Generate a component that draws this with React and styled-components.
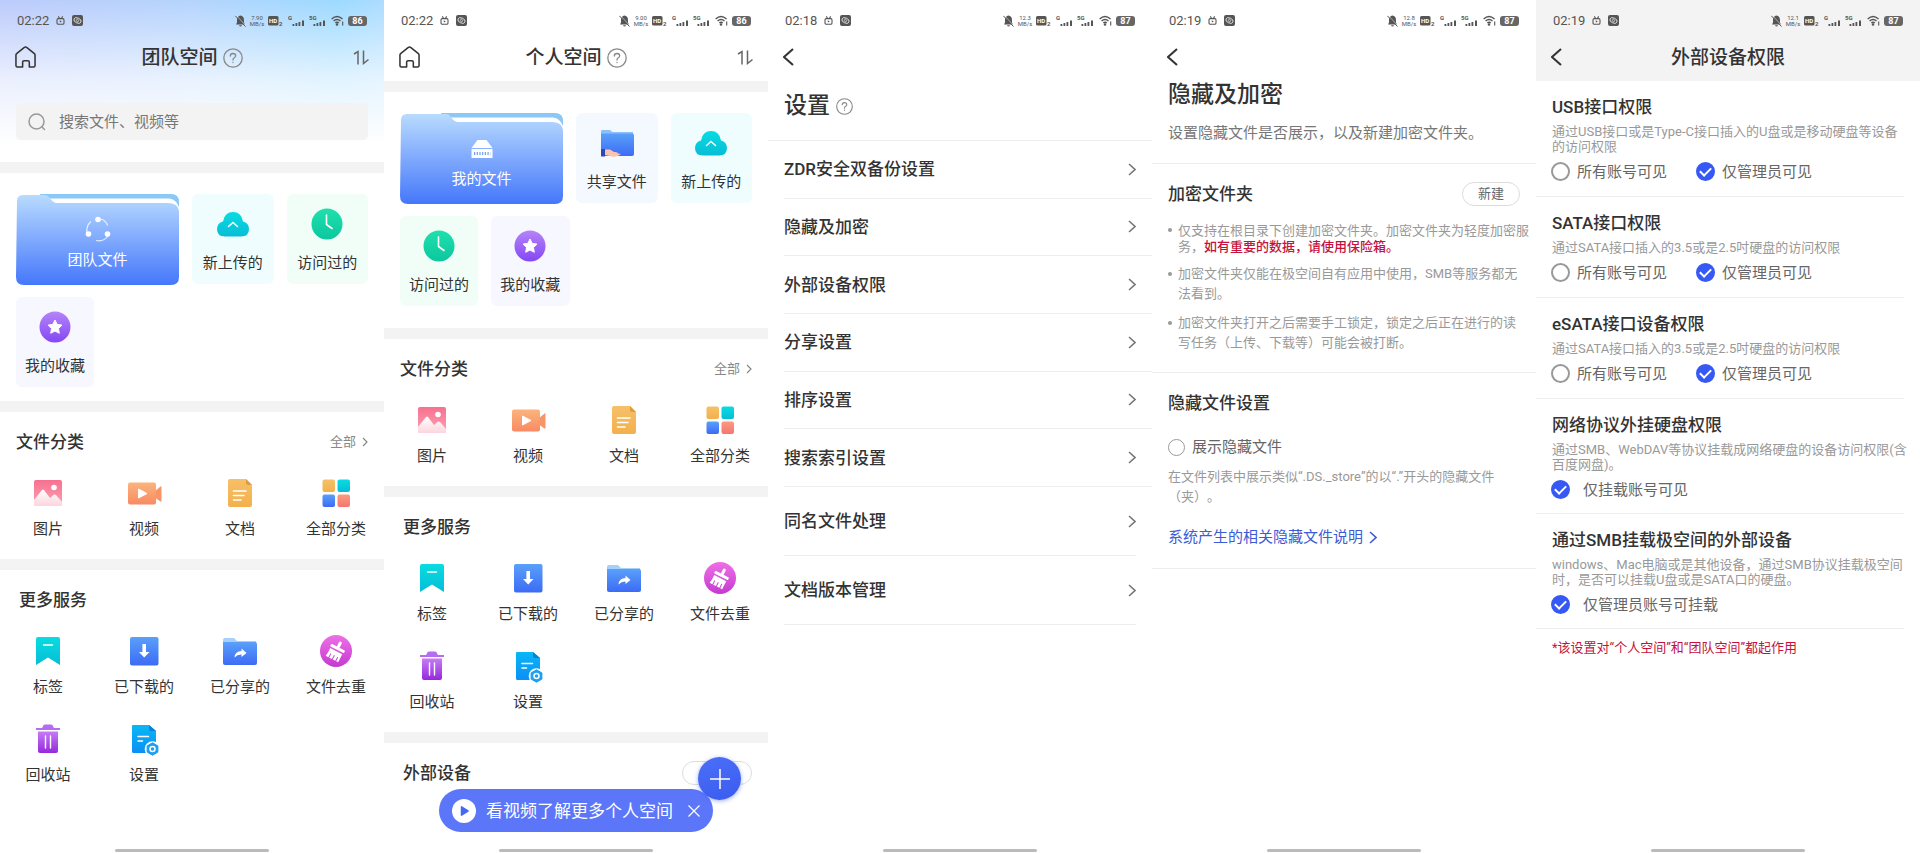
import React, { useState } from "react";
import styled, { createGlobalStyle, css } from "styled-components";

/* ---------- icons ---------- */

const Gradients = () => (
  <HiddenSvg aria-hidden="true">
    <defs>
      {[
        ["gPink", "#f7708f", "#fba3b4"],
        ["gSnow", "#ffffff", "#fcd5dd"],
        ["gOrange", "#fbb47c", "#f88a63"],
        ["gAmber", "#f6c069", "#f3b04c"],
        ["gCyan", "#08dce2", "#07bdd6"],
        ["gBlue", "#5aa0fa", "#3c6bf5"],
        ["gCoral", "#fb9a80", "#f57672"],
        ["gMagenta", "#ee70e6", "#c53ad0"],
        ["gTrash", "#c67cf6", "#9529dc"],
        ["gSky", "#08b7f6", "#0c8ff5"],
        ["gGreen", "#1fe0ac", "#0cc79f"],
        ["gPurple", "#b584f8", "#8447f5"],
        ["gFolder", "#b9dbff", "#4577fb"],
      ].map(([id, from, to]) => (
        <linearGradient key={id} id={id} x1="0" y1="0" x2="0" y2="1">
          <stop offset="0" stopColor={from} />
          <stop offset="1" stopColor={to} />
        </linearGradient>
      ))}
    </defs>
  </HiddenSvg>
);

const Icon = ({ size = 36, children }) => (
  <svg width={size} height={size} viewBox="0 0 36 36" fill="none" aria-hidden="true">
    {children}
  </svg>
);

const ImageIcon = () => (
  <Icon>
    <rect x="4" y="5" width="28" height="26" rx="2" fill="url(#gPink)" />
    <path d="M4 25 L12 15 Q13 14 14 15 L20 23 L24 19.6 Q25 19 26 20 L32 27 V29 Q32 31 30 31 H6 Q4 31 4 29Z" fill="url(#gSnow)" />
    <circle cx="24" cy="12.500" r="2.800" fill="#fff" />
  </Icon>
);

const VideoIcon = () => (
  <Icon>
    <path d="M28 17 L34.5 11.500 Q35.500 11 35.500 12 V26 Q35.500 27 34.500 26.500 L28 22Z" fill="#f99466" />
    <rect x="2" y="7.500" width="28" height="22" rx="2" fill="url(#gOrange)" />
    <path d="M12.500 14 L21 18.500 L12.500 23Z" fill="#fff" stroke="#fff" strokeLinejoin="round" />
  </Icon>
);

const DocIcon = () => (
  <Icon>
    <path d="M8 4 H24 L30 10 V30 Q30 32 28 32 H8 Q6 32 6 30 V6 Q6 4 8 4Z" fill="url(#gAmber)" />
    <path d="M24 4 L30 10 H26 Q24 10 24 8Z" fill="#e29a3a" />
    <path d="M11.500 16 H24 M11.500 20.500 H22 M11.500 25 H19" stroke="#fff" strokeWidth="1.600" strokeLinecap="round" />
  </Icon>
);

const AllIcon = () => (
  <Icon>
    <rect x="4.500" y="4.500" width="12.500" height="12.500" rx="2" fill="url(#gAmber)" />
    <rect x="19.500" y="4.500" width="12.500" height="12.500" rx="2" fill="url(#gCyan)" />
    <rect x="4.500" y="19.500" width="12.500" height="12.500" rx="2" fill="url(#gBlue)" />
    <rect x="19.500" y="19.500" width="12.500" height="12.500" rx="2" fill="url(#gCoral)" />
  </Icon>
);

const TagIcon = () => (
  <Icon>
    <path d="M8 4 H28 Q30 4 30 6 V32 L18 24.500 L6 32 V6 Q6 4 8 4Z" fill="url(#gCyan)" />
    <path d="M13.500 12 H22.500" stroke="#fff" strokeWidth="1.400" strokeLinecap="round" />
  </Icon>
);

const DownloadIcon = () => (
  <Icon>
    <rect x="4" y="4" width="28.500" height="28.500" rx="2" fill="url(#gBlue)" />
    <path d="M16.400 11 H20 V19 H23.500 L18.200 24.500 L13 19 H16.400Z" fill="#fff" />
  </Icon>
);

const ShareIcon = () => (
  <Icon>
    <path d="M1 7 Q1 5 3 5 H12 L15 8 H34 V18 H1Z" fill="#a5d0fc" />
    <path d="M1 9 H33 Q35 9 35 11 V30 Q35 32 33 32 H3 Q1 32 1 30Z" fill="url(#gBlue)" />
    <path d="M12.500 24.500 Q13 18 19.500 18 V15.500 L24.500 20 L19.500 24 V21.500 Q15.500 21.300 12.500 24.500Z" fill="#fff" />
  </Icon>
);

const CleanIcon = () => (
  <Icon>
    <circle cx="18" cy="18" r="16" fill="url(#gMagenta)" />
    <g transform="rotate(27 18 18)" fill="#fff">
      <rect x="16.700" y="7.500" width="3" height="7" rx="1.400" />
      <rect x="10.500" y="13.500" width="15.500" height="3" rx="1" />
      <path d="M11.500 18 H25 V27 H22.800 V22.500 H21.800 V27 H19 V22.500 H18 V27 H15 V22.500 H14 V27 H11 Q12 23 11.500 18Z" />
    </g>
  </Icon>
);

const TrashIcon = () => (
  <Icon>
    <path d="M13 5.500 Q13 3.500 15 3.500 H21 Q23 3.500 23 5.500 L24 7 H30 V9 H6 V7 H12Z" fill="#b46cf0" />
    <path d="M8 10.500 H28 V30 Q28 32 26 32 H10 Q8 32 8 30Z" fill="url(#gTrash)" />
    <path d="M15.500 15 V27 M20.500 15 V27" stroke="#fff" strokeWidth="1.400" strokeLinecap="round" />
  </Icon>
);

const SetupIcon = () => (
  <Icon>
    <path d="M7 4 H23 L30 10 V32 H7.500 Q6 32 6 30.500 V5 Q6 4 7 4Z" fill="url(#gSky)" />
    <path d="M23 4 L30 10 H25 Q23 10 23 8Z" fill="#0a7fd8" />
    <path d="M12 15.500 H22.500 M12 20 H16.500" stroke="#fff" strokeWidth="1.500" strokeLinecap="round" />
    <circle cx="26.500" cy="28" r="7.800" fill="#fff" />
    <path d="M26.500 21.800 L31.900 24.900 V31.100 L26.500 34.200 L21.100 31.100 V24.900Z" fill="#1a9ff3" stroke="#1a9ff3" strokeLinejoin="round" />
    <circle cx="26.500" cy="28" r="2.500" stroke="#fff" strokeWidth="1.500" />
  </Icon>
);

const CloudIcon = () => (
  <Icon>
    <path d="M10 30.500 Q2 30.500 2 23 Q2 17 8 15.500 Q9.500 6 18 6 Q26.500 6 28 15.500 Q34 17 34 23 Q34 30.500 26 30.500Z" fill="url(#gCyan)" />
    <path d="M13.500 20.500 L18 16.500 L22.500 20.500" stroke="#fff" strokeWidth="1.500" strokeLinecap="round" />
  </Icon>
);

const ClockIcon = () => (
  <Icon>
    <circle cx="18" cy="18" r="15.500" fill="url(#gGreen)" />
    <path d="M17.500 9 V18.500 L23 22.500" stroke="#fff" strokeWidth="1.600" strokeLinecap="round" strokeLinejoin="round" />
  </Icon>
);

const StarIcon = () => (
  <Icon>
    <circle cx="18" cy="18" r="15.500" fill="url(#gPurple)" />
    <path d="M18 11 L20.200 15.400 L25 16.100 L21.500 19.500 L22.300 24.300 L18 22 L13.700 24.300 L14.500 19.500 L11 16.100 L15.800 15.400Z" fill="#fff" stroke="#fff" strokeLinejoin="round" />
  </Icon>
);

const SharedFolderIcon = () => (
  <Icon>
    <path d="M2 6 Q2 5 3 5 H11 L13.500 7 H34 V16 H2Z" fill="#8cc0fa" />
    <path d="M2 8.500 H33 Q35 8.500 35 10 V29 Q35 31 33 31 H2Z" fill="url(#gBlue)" />
    <path d="M2 24 H6 V31.500 H2Z" fill="#2c49b8" />
    <path d="M6 24.500 H11 L15 27 Q19 26.500 19 28.500 L22 29 Q18 32.500 13 31.500 L6 30Z" fill="#fbc3ae" />
  </Icon>
);

const HouseIcon = () => (
  <svg width="21" height="22" viewBox="0 0 22 23" fill="none" stroke="currentColor" strokeWidth="1.600" strokeLinejoin="round" aria-hidden="true">
    <path d="M1 9.500 Q1 8.500 2 7.700 L9.500 1.600 Q11 .6 12.500 1.600 L20 7.700 Q21 8.500 21 9.500 V20.500 Q21 22 19.500 22 H15 V17 Q15 15.500 13.500 15.500 H9.500 Q8 15.500 8 17 V22 H2.500 Q1 22 1 20.500Z" />
  </svg>
);

const SortIcon = () => (
  <svg width="16" height="15" viewBox="0 0 16 15" fill="none" stroke="#666" strokeWidth="1.500" aria-hidden="true">
    <path d="M1 4 L5 1.500 V14.500 M10.500 .5 V13.500 L15.500 9.500" />
  </svg>
);

const HelpIcon = ({ size = 20 }) => (
  <svg width={size} height={size} viewBox="0 0 20 20" fill="none" stroke="currentColor" strokeWidth="1.300" strokeLinecap="round" aria-hidden="true">
    <circle cx="10" cy="10" r="9.200" />
    <path d="M7.300 8 Q7.300 5.500 10 5.500 Q12.700 5.500 12.700 7.800 Q12.700 9.200 11 10 Q10 10.600 10 12" />
    <path d="M10 14.300 V14.500" />
  </svg>
);

const Chevron = ({ back, width = 7, height = 12, weight = 1.5 }) => (
  <svg width={width} height={height} viewBox={`0 0 ${width} ${height}`} fill="none" stroke="currentColor" strokeWidth={weight} aria-hidden="true">
    <path
      d={
        back
          ? `M${width - 1} 1 L1 ${height / 2} L${width - 1} ${height - 1}`
          : `M1 1 L${width - 1} ${height / 2} L1 ${height - 1}`
      }
    />
  </svg>
);

const SearchIcon = () => (
  <svg width="18" height="18" viewBox="0 0 18 18" fill="none" stroke="#999" strokeWidth="1.500" strokeLinecap="round" aria-hidden="true">
    <circle cx="8.500" cy="8.500" r="7.500" />
    <path d="M14 14 L16.500 16.500" />
  </svg>
);

const Signal = ({ name }) => (
  <svg width="17" height="12" viewBox="0 0 17 12" fill="currentColor" aria-hidden="true">
    <text x="0" y="5" fontSize="6" fontWeight="700">{name}</text>
    <rect x="4.500" y="9" width="1.800" height="2" />
    <rect x="7.500" y="8" width="1.800" height="3" />
    <rect x="10.500" y="7" width="1.800" height="4" />
    <rect x="14" y="5.500" width="2" height="5.500" />
  </svg>
);

const BellOffIcon = () => (
  <svg width="11" height="12" viewBox="0 0 11 12" aria-hidden="true">
    <path d="M5.500 .5 Q9 1 9 5 V7.500 L10 9.500 H1 L2 7.500 V5 Q2 1 5.500 .5Z M4 10.200 H7 Q6.500 11.500 5.500 11.500 Q4.500 11.500 4 10.200Z" fill="currentColor" />
    <path d="M1.200 .4 L10.800 10.600" stroke="#fff" strokeWidth=".6" />
    <path d="M.3 .8 L10.500 11.500" stroke="currentColor" strokeWidth="1" />
  </svg>
);

const WifiIcon = () => (
  <svg width="13" height="11" viewBox="0 0 13 11" fill="none" stroke="currentColor" strokeWidth="1.400" aria-hidden="true">
    <path d="M.7 4 Q6 -1.200 11.500 4 M2.600 6 Q6 2.800 9.500 6 M4.400 8 Q6 6.500 7.800 8" />
    <circle cx="6" cy="9.500" r=".6" fill="currentColor" />
    <path d="M11.700 6.500 V10.500" strokeWidth="1.100" />
  </svg>
);

const HdIcon = () => (
  <svg width="15" height="12" viewBox="0 0 15 12" fill="currentColor" aria-hidden="true">
    <rect x="0" y="1" width="10.500" height="9.500" rx="1.500" />
    <text x="1" y="8" fontSize="6" fontWeight="700" fill="#fff">HD</text>
    <text x="11" y="11" fontSize="6" fontWeight="700">2</text>
  </svg>
);

const TvIcon = () => (
  <svg width="9" height="9" viewBox="0 0 9 9" fill="none" stroke="currentColor" strokeWidth="1.100" aria-hidden="true">
    <rect x="1" y="2.600" width="7" height="5.600" rx="1.300" />
    <path d="M2.300 .4 L3.500 2.300 M6.700 .4 L5.500 2.300" />
    <path d="M3.800 4.200 L5.800 5.400 L3.800 6.600Z" fill="currentColor" stroke="none" />
  </svg>
);

const AppIcon = () => (
  <svg width="11" height="11" viewBox="0 0 11 11" fill="none" aria-hidden="true">
    <rect width="11" height="11" rx="2" fill="currentColor" />
    <ellipse cx="5.500" cy="5.500" rx="3.800" ry="2.500" transform="rotate(25 5.500 5.500)" stroke="#fff" strokeWidth=".7" />
    <circle cx="5.500" cy="5.500" r="1.200" stroke="#fff" strokeWidth=".6" />
  </svg>
);

const TeamIcon = () => (
  <svg width="28" height="28" viewBox="0 0 28 28" fill="none" stroke="#fff" strokeLinecap="round" aria-hidden="true">
    <circle cx="14" cy="4.500" r="2.800" fill="#fff" stroke="none" />
    <circle cx="4.500" cy="19" r="2.800" fill="#fff" stroke="none" />
    <circle cx="23.500" cy="19" r="2.800" fill="#fff" stroke="none" />
    <path d="M14 3.500 Q21 4 23.500 10" strokeWidth="1.200" opacity=".8" />
    <path d="M3 18 Q2 11 6.500 7" strokeWidth="1.200" opacity=".8" />
    <path d="M24 21 Q19.500 27 12.500 25.500" strokeWidth="1.200" opacity=".8" />
  </svg>
);

const NasIcon = () => (
  <svg width="28" height="28" viewBox="0 0 28 28" aria-hidden="true">
    <path d="M9.500 6 H18.500 L24.500 14 H3.500Z M3.500 15 H24.500 V24 H3.500Z" fill="#fff" />
    <path d="M6 19.500 H22.500" stroke="#6f9dfb" strokeWidth="3" strokeDasharray="1.200 1.500" />
  </svg>
);

/* ---------- shared parts ---------- */

const StatusBar = ({ time, speed, battery }) => (
  <Status>
    <StatusLeft>
      <time>{time}</time>
      <TvIcon />
      <AppIcon />
    </StatusLeft>
    <StatusRight>
      <BellOffIcon />
      <Speed>
        <span>{speed}</span>
        <span>MB/s</span>
      </Speed>
      <HdIcon />
      <Signal name="G" />
      <Signal name="5G" />
      <WifiIcon />
      <Battery>{battery}</Battery>
    </StatusRight>
  </Status>
);

const BackButton = () => (
  <IconButton type="button" aria-label="返回">
    <Chevron back width={11} height={18} weight={2} />
  </IconButton>
);

const SpaceNav = ({ title }) => (
  <Nav>
    <IconButton type="button" aria-label="首页">
      <HouseIcon />
    </IconButton>
    <NavTitle>
      {title}
      <HelpButton type="button" aria-label="帮助">
        <HelpIcon />
      </HelpButton>
    </NavTitle>
    <IconButton type="button" aria-label="排序" $end>
      <SortIcon />
    </IconButton>
  </Nav>
);

const FolderTile = ({ name, icon, tab }) => (
  <Folder type="button">
    <FolderShape viewBox="0 0 163 91" preserveAspectRatio="none" aria-hidden="true">
      <path d={`M${tab - 8} 0 H155 Q163 0 163 8 V40 H${tab}Z`} fill="#8bc8f6" />
      <path d={`M${tab} 4.500 H153 Q160 5 163 13 V40 H${tab}Z`} fill="#fff" />
      <path
        d={`M7 1 H${tab - 3} Q${tab} 1 ${tab + 2} 4 Q${tab + 5} 9 ${tab + 9} 9 H152 Q163 9 163 19 V83 Q163 91 155 91 H8 Q0 91 0 83 L1 7 Q1 1 7 1Z`}
        fill="url(#gFolder)"
      />
    </FolderShape>
    <FolderContent>
      {icon}
      {name}
    </FolderContent>
  </Folder>
);

const ShortcutTile = ({ name, icon, color }) => (
  <Tile type="button" $color={color}>
    {icon}
    {name}
  </Tile>
);

const categories = [
  { name: "图片", icon: <ImageIcon /> },
  { name: "视频", icon: <VideoIcon /> },
  { name: "文档", icon: <DocIcon /> },
  { name: "全部分类", icon: <AllIcon /> },
];

const services = [
  { name: "标签", icon: <TagIcon /> },
  { name: "已下载的", icon: <DownloadIcon /> },
  { name: "已分享的", icon: <ShareIcon /> },
  { name: "文件去重", icon: <CleanIcon /> },
  { name: "回收站", icon: <TrashIcon /> },
  { name: "设置", icon: <SetupIcon /> },
];

const IconGrid = ({ items }) => (
  <IconList>
    {items.map((item) => (
      <li key={item.name}>
        <IconItem type="button">
          {item.icon}
          {item.name}
        </IconItem>
      </li>
    ))}
  </IconList>
);

const SpaceSections = () => (
  <>
    <Section>
      <SectionHead>
        <h2>文件分类</h2>
        <MoreLink href="#all">
          全部 <Chevron width={6} height={10} weight={1.2} />
        </MoreLink>
      </SectionHead>
      <IconGrid items={categories} />
    </Section>
    <Band />
    <Section>
      <SectionHead $indent>
        <h2>更多服务</h2>
      </SectionHead>
      <IconGrid items={services} />
    </Section>
  </>
);

/* ---------- screens ---------- */

const TeamSpace = () => (
  <Phone $sky>
    <StatusBar time="02:22" speed="7.90" battery="86" />
    <SpaceNav title="团队空间" />
    <SearchBox>
      <SearchIcon />
      <input type="text" placeholder="搜索文件、视频等" aria-label="搜索文件、视频等" />
    </SearchBox>
    <Band />
    <Tiles>
      <TileRow $wide>
        <FolderTile name="团队文件" icon={<TeamIcon />} tab={32} />
        <ShortcutTile name="新上传的" icon={<CloudIcon />} color="#f0fdff" />
        <ShortcutTile name="访问过的" icon={<ClockIcon />} color="#f1fef8" />
      </TileRow>
      <TileRow>
        <ShortcutTile name="我的收藏" icon={<StarIcon />} color="#f6f7ff" />
      </TileRow>
    </Tiles>
    <Band />
    <SpaceSections />
    <HomeBar />
  </Phone>
);

const PersonalSpace = () => {
  const [tip, setTip] = useState(true);

  return (
    <Phone>
      <StatusBar time="02:22" speed="9.00" battery="86" />
      <SpaceNav title="个人空间" />
      <Band />
      <Tiles $loose>
        <TileRow $wide>
          <FolderTile name="我的文件" icon={<NasIcon />} tab={49} />
          <ShortcutTile name="共享文件" icon={<SharedFolderIcon />} color="#f3f9ff" />
          <ShortcutTile name="新上传的" icon={<CloudIcon />} color="#f0fdff" />
        </TileRow>
        <TileRow>
          <ShortcutTile name="访问过的" icon={<ClockIcon />} color="#f1fef8" />
          <ShortcutTile name="我的收藏" icon={<StarIcon />} color="#f6f7ff" />
        </TileRow>
      </Tiles>
      <Band />
      <SpaceSections />
      <Band />
      <SectionHead $indent>
        <h2>外部设备</h2>
        <PillButton type="button" aria-label="设备操作" $long />
      </SectionHead>
      {tip && (
        <Toast>
          <svg width="24" height="24" viewBox="0 0 24 24" aria-hidden="true">
            <circle cx="12" cy="12" r="12" fill="#fff" />
            <path d="M9.500 7.800 L16 12 L9.500 16.200Z" fill="#4668f3" stroke="#4668f3" strokeWidth="1.500" strokeLinejoin="round" />
          </svg>
          <a href="#video">看视频了解更多个人空间</a>
          <button type="button" aria-label="关闭" onClick={() => setTip(false)}>
            <svg width="12" height="12" viewBox="0 0 12 12" stroke="#fff" strokeWidth="1.200" aria-hidden="true">
              <path d="M.5 .5 L11.500 11.500 M11.500 .5 L.5 11.500" />
            </svg>
          </button>
        </Toast>
      )}
      <AddButton type="button" aria-label="添加">
        <svg width="20" height="20" viewBox="0 0 20 20" stroke="#fff" strokeWidth="1.500" aria-hidden="true">
          <path d="M10 0 V20 M0 10 H20" />
        </svg>
      </AddButton>
      <HomeBar />
    </Phone>
  );
};

const settings = ["ZDR安全双备份设置", "隐藏及加密", "外部设备权限", "分享设置", "排序设置", "搜索索引设置"];
const fileSettings = ["同名文件处理", "文档版本管理"];

const Settings = () => (
  <Phone>
    <StatusBar time="02:18" speed="12.3" battery="87" />
    <Nav>
      <BackButton />
    </Nav>
    <PageHead $tall>
      <h1>
        设置
        <HelpButton type="button" aria-label="帮助">
          <HelpIcon size={17} />
        </HelpButton>
      </h1>
    </PageHead>
    <SettingList>
      {settings.map((name) => (
        <SettingRow key={name} href="#setting">
          {name}
          <Chevron width={8} height={13} weight={1.6} />
        </SettingRow>
      ))}
    </SettingList>
    <SettingList $inset>
      {fileSettings.map((name) => (
        <SettingRow key={name} href="#setting">
          {name}
          <Chevron width={8} height={13} weight={1.6} />
        </SettingRow>
      ))}
    </SettingList>
    <HomeBar />
  </Phone>
);

const HideAndEncrypt = () => {
  const [show, setShow] = useState(false);

  return (
    <Phone>
      <StatusBar time="02:19" speed="12.8" battery="87" />
      <Nav>
        <BackButton />
      </Nav>
      <PageHead>
        <h1>隐藏及加密</h1>
        <p>设置隐藏文件是否展示，以及新建加密文件夹。</p>
      </PageHead>
      <Block>
        <SectionHead>
          <h2>加密文件夹</h2>
          <PillButton type="button">新建</PillButton>
        </SectionHead>
        <Bullets>
          <Bullet $dense>
            仅支持在根目录下创建加密文件夹。加密文件夹为轻度加密服务，<em>如有重要的数据，请使用保险箱。</em>
          </Bullet>
          <Bullet>加密文件夹仅能在极空间自有应用中使用，SMB等服务都无法看到。</Bullet>
          <Bullet>加密文件夹打开之后需要手工锁定，锁定之后正在进行的读写任务（上传、下载等）可能会被打断。</Bullet>
        </Bullets>
      </Block>
      <Block>
        <SectionHead>
          <h2>隐藏文件设置</h2>
        </SectionHead>
        <HiddenFiles>
          <Option>
            <Round type="checkbox" $size={17} checked={show} onChange={() => setShow(!show)} />
            展示隐藏文件
          </Option>
          <p>在文件列表中展示类似“.DS._store”的以“.”开头的隐藏文件（夹）。</p>
          <a href="#explain">
            系统产生的相关隐藏文件说明
            <Chevron width={8} height={13} weight={1.6} />
          </a>
        </HiddenFiles>
      </Block>
      <HomeBar />
    </Phone>
  );
};

const permissions = [
  { id: "usb", title: "USB接口权限", desc: "通过USB接口或是Type-C接口插入的U盘或是移动硬盘等设备的访问权限" },
  { id: "sata", title: "SATA接口权限", desc: "通过SATA接口插入的3.5或是2.5吋硬盘的访问权限" },
  { id: "esata", title: "eSATA接口设备权限", desc: "通过SATA接口插入的3.5或是2.5吋硬盘的访问权限" },
  {
    id: "net",
    title: "网络协议外挂硬盘权限",
    desc: "通过SMB、WebDAV等协议挂载成网络硬盘的设备访问权限(含百度网盘)。",
    check: "仅挂载账号可见",
  },
  {
    id: "smb",
    title: "通过SMB挂载极空间的外部设备",
    desc: "windows、Mac电脑或是其他设备，通过SMB协议挂载极空间时，是否可以挂载U盘或是SATA口的硬盘。",
    check: "仅管理员账号可挂载",
  },
];

const DevicePermissions = () => (
  <Phone>
    <GreyHead>
      <StatusBar time="02:19" speed="12.1" battery="87" />
      <Nav>
        <BackButton />
        <NavTitle>外部设备权限</NavTitle>
      </Nav>
    </GreyHead>
    {permissions.map((item) => (
      <Permission key={item.id}>
        <h2>{item.title}</h2>
        <p>{item.desc}</p>
        {item.check ? (
          <Options $single>
            <Option>
              <Round type="checkbox" defaultChecked />
              {item.check}
            </Option>
          </Options>
        ) : (
          <Options>
            <Option>
              <Round type="radio" name={item.id} />
              所有账号可见
            </Option>
            <Option>
              <Round type="radio" name={item.id} defaultChecked />
              仅管理员可见
            </Option>
          </Options>
        )}
      </Permission>
    ))}
    <Note>*该设置对“个人空间”和“团队空间”都起作用</Note>
    <HomeBar />
  </Phone>
);

export default function App() {
  return (
    <>
      <GlobalStyle />
      <Gradients />
      <Screens>
        <TeamSpace />
        <PersonalSpace />
        <Settings />
        <HideAndEncrypt />
        <DevicePermissions />
      </Screens>
    </>
  );
}

/* ---------- styles ---------- */

const GlobalStyle = createGlobalStyle`
  * {
    box-sizing: border-box;
  }
  body {
    margin: 0;
    background: #fff;
    color: #333;
    font-family: Roboto, "Noto Sans CJK SC", sans-serif;
    font-size: 15px;
    line-height: 22px;
    text-spacing-trim: space-all;
  }
  h1, h2, p, ul {
    margin: 0;
    padding: 0;
    list-style: none;
  }
  h2 {
    font-size: 17px;
    line-height: 24px;
    font-weight: 500;
  }
  a {
    color: inherit;
    text-decoration: none;
  }
  button {
    padding: 0;
    border: 0;
    background: none;
    color: inherit;
    font: inherit;
    cursor: pointer;
  }
  svg {
    display: block;
    flex: none;
  }
`;

const HiddenSvg = styled.svg`
  position: absolute;
  width: 0;
  height: 0;
`;

const Screens = styled.main`
  display: grid;
  grid-template-columns: repeat(5, minmax(0, 1fr));
  min-height: 100vh;
`;

const Phone = styled.section`
  position: relative;
  display: flex;
  flex-direction: column;
  background: #fff;
  ${({ $sky }) =>
    $sky &&
    css`
      background:
        linear-gradient(to bottom, transparent, rgba(255, 255, 255, 0.7) 80px, #fff 145px),
        linear-gradient(to right, #bccbfb, #b5d4fd 50%, #9ddaff 88%, #abdcff);
    `}
`;

const Status = styled.div`
  display: flex;
  justify-content: space-between;
  align-items: center;
  height: 41px;
  padding: 0 17px;
  color: #555;
`;

const StatusLeft = styled.div`
  display: flex;
  align-items: center;
  gap: 7px;
  font-size: 13px;
`;

const StatusRight = styled.div`
  display: flex;
  justify-content: space-between;
  align-items: center;
  width: 132px;
`;

const Speed = styled.span`
  display: flex;
  flex-direction: column;
  align-items: center;
  width: 13px;
  font-size: 6px;
  line-height: 6px;
`;

const Battery = styled.span`
  width: 19px;
  border-radius: 3px;
  background: #666;
  color: #fff;
  font-size: 9px;
  line-height: 10px;
  font-weight: 700;
  text-align: center;
`;

const Nav = styled.nav`
  display: grid;
  grid-template-columns: 1fr auto 1fr;
  align-items: center;
  height: 40px;
  padding: 0 15px 8px;
`;

const IconButton = styled.button`
  justify-self: ${({ $end }) => ($end ? "end" : "start")};
`;

const NavTitle = styled.h1`
  display: flex;
  align-items: center;
  gap: 5px;
  padding-top: 2px;
  font-size: 19px;
  line-height: 28px;
  font-weight: 500;
`;

const HelpButton = styled.button`
  color: #888;
`;

const GreyHead = styled.header`
  background: #f3f3f3;
`;

const SearchBox = styled.label`
  display: flex;
  align-items: center;
  gap: 13px;
  height: 37px;
  margin: 22px 16px;
  padding: 0 12px;
  border-radius: 5px;
  background: #f3f3f3;
  input {
    flex: 1;
    min-width: 0;
    padding: 0;
    border: 0;
    outline: 0;
    background: none;
    font: inherit;
  }
  input::placeholder {
    color: #777;
  }
`;

const Band = styled.div`
  height: 11px;
  background: #f3f3f3;
`;

const Tiles = styled.div`
  display: grid;
  gap: 13px;
  padding: 21px 16px ${({ $loose }) => ($loose ? 22 : 14)}px;
  background: #fff;
`;

const TileRow = styled.div`
  display: grid;
  grid-template-columns: ${({ $wide }) => ($wide ? "2fr 1fr 1fr" : "repeat(4, 1fr)")};
  gap: 13px;
`;

const Tile = styled.button`
  display: flex;
  flex-direction: column;
  align-items: center;
  gap: 10px;
  height: 90px;
  padding-top: 12px;
  border-radius: 6px;
  background: ${({ $color }) => $color};
`;

const Folder = styled.button`
  display: grid;
  height: 90px;
  color: #fff;
  > * {
    grid-area: 1 / 1;
  }
`;

const FolderShape = styled.svg`
  width: 100%;
  height: 91px;
`;

const FolderContent = styled.span`
  z-index: 1;
  display: flex;
  flex-direction: column;
  align-items: center;
  gap: 6px;
  padding-top: 21px;
`;

const Section = styled.section`
  padding-bottom: 19px;
  background: #fff;
`;

const SectionHead = styled.header`
  display: flex;
  justify-content: space-between;
  align-items: center;
  height: 42px;
  padding: 18px 16px 0 ${({ $indent }) => ($indent ? 19 : 16)}px;
`;

const MoreLink = styled.a`
  display: flex;
  align-items: center;
  gap: 6px;
  color: #888;
  font-size: 13px;
`;

const IconList = styled.ul`
  display: grid;
  grid-template-columns: repeat(4, 1fr);
  row-gap: 23px;
  padding-top: 21px;
`;

const IconItem = styled.button`
  display: flex;
  flex-direction: column;
  align-items: center;
  gap: 7px;
  width: 100%;
`;

const PillButton = styled.button`
  width: ${({ $long }) => ($long ? 70 : 58)}px;
  height: 24px;
  border: 1px solid #ddd;
  border-radius: 12px;
  color: #666;
  font-size: 13px;
  line-height: 22px;
`;

const Toast = styled.div`
  position: absolute;
  left: 55px;
  right: 55px;
  bottom: 21px;
  display: flex;
  align-items: center;
  gap: 10px;
  height: 43px;
  padding: 0 13px;
  border-radius: 22px;
  background: #5c76fa;
  color: #fff;
  font-size: 17px;
  white-space: nowrap;
  button {
    margin-left: auto;
  }
`;

const AddButton = styled.button`
  position: absolute;
  right: 27px;
  bottom: 53px;
  display: grid;
  place-items: center;
  width: 43px;
  height: 43px;
  border-radius: 50%;
  background: linear-gradient(160deg, #4b6ff8, #3a5cf0);
  box-shadow: 0 1px 4px rgba(60, 90, 240, 0.5);
`;

const HomeBar = styled.div`
  width: 40%;
  height: 3px;
  margin: auto auto 1px;
  border-radius: 2px;
  background: #bbb;
`;

const PageHead = styled.header`
  padding: 0 16px;
  border-bottom: 1px solid #eee;
  h1 {
    display: flex;
    align-items: center;
    gap: 6px;
    font-size: 23px;
    line-height: 28px;
    font-weight: 500;
  }
  p {
    padding: 13px 0 19px;
    color: #777;
  }
  ${({ $tall }) =>
    $tall &&
    css`
      padding: 11px 16px 20px;
    `}
`;

const SettingRow = styled.a`
  display: flex;
  justify-content: space-between;
  align-items: center;
  padding-right: 16px;
  border-bottom: 1px solid #eee;
  font-size: 17px;
  font-weight: 500;
  svg {
    color: #777;
  }
`;

const SettingList = styled.div`
  display: grid;
  grid-auto-rows: 1fr;
  height: 346px;
  padding-left: 16px;
  ${({ $inset }) =>
    $inset &&
    css`
      height: 138px;
      padding-right: 16px;
      ${SettingRow} {
        padding-right: 0;
      }
    `}
`;

const Block = styled.section`
  border-bottom: 1px solid #eee;
`;

const Bullets = styled.ul`
  display: grid;
  gap: 9px;
  padding: 17px 0 19px 16px;
`;

const Bullet = styled.li`
  position: relative;
  padding: 0 16px 0 10px;
  color: #999;
  font-size: 13px;
  line-height: 20px;
  &::before {
    content: "";
    position: absolute;
    top: 8px;
    left: 0;
    width: 4px;
    height: 4px;
    border-radius: 50%;
    background: #999;
  }
  em {
    color: #c4123c;
    font-style: normal;
    font-weight: 500;
  }
  ${({ $dense }) =>
    $dense &&
    css`
      padding-right: 4px;
      line-height: 16px;
      &::before {
        top: 5px;
      }
    `}
`;

const HiddenFiles = styled.div`
  padding: 21px 16px 20px;
  p {
    padding: 9px 0 19px;
    color: #999;
    font-size: 13px;
    line-height: 20px;
  }
  a {
    display: flex;
    align-items: center;
    gap: 6px;
    color: #3c5bd6;
  }
`;

const Option = styled.label`
  display: flex;
  align-items: center;
  gap: 7px;
  color: #666;
`;

const Round = styled.input`
  appearance: none;
  display: grid;
  place-items: center;
  flex: none;
  width: ${({ $size }) => $size || 19}px;
  height: ${({ $size }) => $size || 19}px;
  margin: 0;
  border: ${({ $size }) => ($size ? 1 : 2)}px solid #999;
  border-radius: 50%;
  &:checked {
    border-color: #3659f5;
    background: #3659f5;
  }
  &:checked::after {
    content: "";
    width: 9px;
    height: 5px;
    margin-bottom: 3px;
    border: solid #fff;
    border-width: 0 0 2px 2px;
    transform: rotate(-45deg);
  }
`;

const Permission = styled.section`
  margin-right: 16px;
  padding: 14px 0 0 16px;
  border-bottom: 1px solid #eee;
  p {
    margin: 5px -4px 8px 0;
    color: #999;
    font-size: 13px;
    line-height: 15px;
  }
`;

const Options = styled.div`
  display: flex;
  gap: 29px;
  height: 34px;
  margin-left: -1px;
  ${Option} {
    height: 19px;
  }
  ${({ $single }) =>
    $single &&
    css`
      height: 33px;
      ${Option} {
        gap: 13px;
      }
    `}
`;

const Note = styled.p`
  padding: 8px 16px;
  color: #c4123c;
  font-size: 13px;
`;
